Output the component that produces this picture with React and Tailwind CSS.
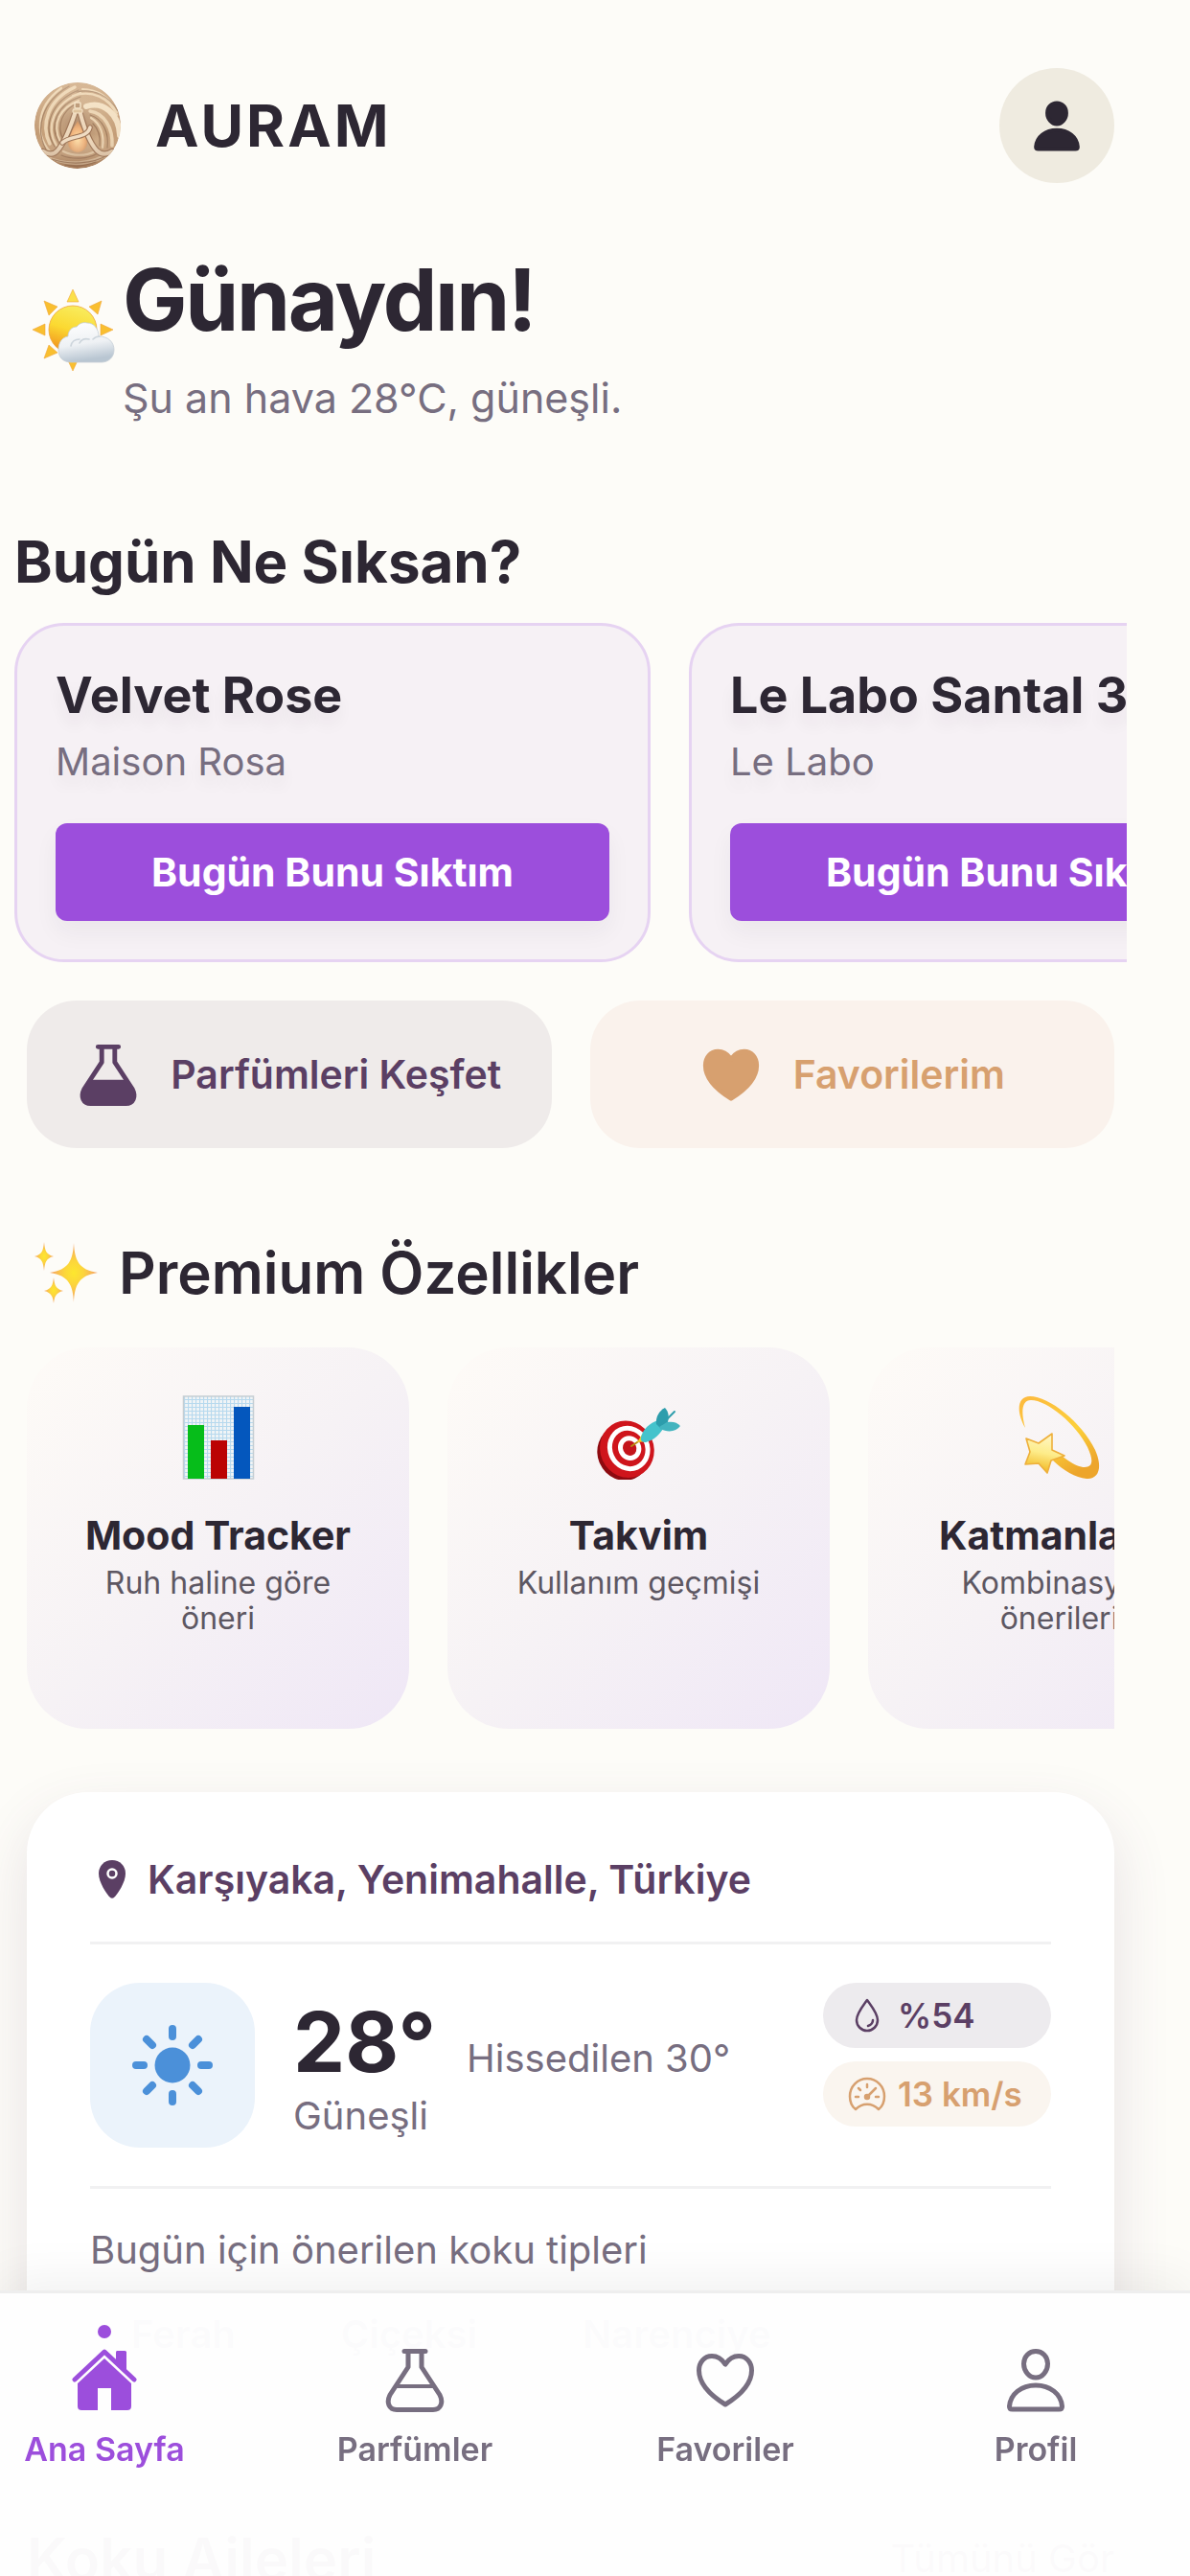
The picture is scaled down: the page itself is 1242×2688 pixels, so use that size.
import { useId } from "react";

/* -----------------------------
   Data
------------------------------*/
const suggestions = [
  { name: "Velvet Rose", brand: "Maison Rosa" },
  { name: "Le Labo Santal 33", brand: "Le Labo" },
];

const features = [
  { icon: ChartIcon, title: "Mood Tracker", text: "Ruh haline göre öneri" },
  { icon: TargetIcon, title: "Takvim", text: "Kullanım geçmişi" },
  { icon: DizzyIcon, title: "Katmanlama", text: "Kombinasyon önerileri" },
];

const scentTypes = ["Ferah", "Çiçeksi", "Narenciye"];

const tabs = [
  { label: "Ana Sayfa", icon: HomeIcon, active: true },
  { label: "Parfümler", icon: FlaskIcon },
  { label: "Favoriler", icon: HeartIcon },
  { label: "Profil", icon: PersonIcon },
];

/* -----------------------------
   Icons
------------------------------*/
function Logo() {
  const id = useId();
  return (
    <svg viewBox="0 0 106 106" className="size-[106px]" aria-hidden="true">
      <defs>
        <radialGradient id={`${id}-base`} cx="50%" cy="50%" r="50%">
          <stop offset="0" stopColor="#a98365" />
          <stop offset="0.55" stopColor="#c9a681" />
          <stop offset="1" stopColor="#c29a74" />
        </radialGradient>
        <linearGradient id={`${id}-shade`} x1="0" y1="0" x2="0" y2="1">
          <stop offset="0" stopColor="#fff0d8" stopOpacity="0.35" />
          <stop offset="0.6" stopColor="#fff0d8" stopOpacity="0" />
          <stop offset="1" stopColor="#7d5136" stopOpacity="0.5" />
        </linearGradient>
        <radialGradient id={`${id}-glow`} cx="50%" cy="60%" r="60%">
          <stop offset="0" stopColor="#ffe0a8" />
          <stop offset="0.6" stopColor="#f0b27a" />
          <stop offset="1" stopColor="#c98a58" />
        </radialGradient>
        <clipPath id={`${id}-clip`}>
          <circle cx="53" cy="53" r="45" />
        </clipPath>
      </defs>
      <g clipPath={`url(#${id}-clip)`} fill="none" strokeLinecap="round">
        <circle cx="53" cy="53" r="45" fill={`url(#${id}-base)`} />
        <g stroke="#ead2b0" strokeWidth="2.2">
          <path d="M28 84C8 66 8 34 36 14" />
          <path d="M24 72C14 52 22 26 50 13" strokeWidth="3.5" />
          <path d="M31 74C19 54 28 30 56 19" />
          <path d="M35 70C25 50 36 34 54 27" />
          <path d="M58 15c16 0 29 9 36 24" />
          <path d="M48 22c20-7 38 2 46 20" />
          <path d="M62 33c18-6 34 8 35 30" strokeWidth="6" stroke="#f2dfc2" />
          <path d="M66 38c15 2 24 18 23 36" strokeWidth="3.5" />
          <path d="M67 45c10 6 14 18 12 31" />
          <path d="M22 86c18 8 46 8 66-6" />
          <path d="M32 90c16 5 34 4 50-5" />
          <path d="M38 80c10 5 24 5 33 0" />
        </g>
        <g stroke="#8f6a4e" strokeWidth="1.2" opacity="0.75">
          <path d="M20 78C8 56 16 28 44 12" />
          <path d="M29 75C16 54 25 28 54 16" />
          <path d="M34 72C22 52 32 31 56 23" />
          <path d="M38 68C30 52 38 38 50 31" />
          <path d="M52 18c18-4 34 4 43 20" />
          <path d="M66 42c13 4 20 18 18 34" />
          <path d="M69 51c6 6 8 14 7 23" />
          <path d="M26 88c18 6 42 6 60-5" />
          <path d="M36 84c12 5 28 4 38-2" />
          <path d="M40 94c10 2 22 1 32-3" />
        </g>
        <path d="M53 48c4 8 10 14 10 23a10 10 0 0 1-20 0c0-9 6-15 10-23z" fill={`url(#${id}-glow)`} />
        <path d="M50 41C45 56 40 70 32 79c-4 5-10 4-15 1" stroke="#9a7153" strokeWidth="6.5" />
        <path d="M50 41C45 56 40 70 32 79c-4 5-10 4-15 1" stroke="#ecd6ba" strokeWidth="4" />
        <path d="M56 41c4 15 9 29 17 38 5 5 11 4 16 1" stroke="#9a7153" strokeWidth="6.5" />
        <path d="M56 41c4 15 9 29 17 38 5 5 11 4 16 1" stroke="#ecd6ba" strokeWidth="4" />
        <path d="M37 71c8-8 26-4 29-16" stroke="#9a7153" strokeWidth="5.5" />
        <path d="M37 71c8-8 26-4 29-16" stroke="#f0dcc2" strokeWidth="3.5" />
        <rect x="50" y="29" width="6" height="6" rx="1" fill="#b08a66" stroke="#f4e4c8" strokeWidth="1.4" />
        <rect x="48" y="36" width="10" height="4" rx="1" fill="#d9bb93" stroke="#f4e4c8" strokeWidth="1" />
        <circle cx="53" cy="53" r="45" fill={`url(#${id}-shade)`} />
      </g>
    </svg>
  );
}

function SunCloudIcon() {
  const id = useId();
  return (
    <svg viewBox="0 0 86 86" className="size-[86px]" aria-hidden="true">
      <defs>
        <linearGradient id={`${id}-sun`} x1="0.6" y1="0" x2="0.3" y2="1">
          <stop offset="0" stopColor="#f8ec5e" />
          <stop offset="0.5" stopColor="#fbd931" />
          <stop offset="1" stopColor="#f08c1c" />
        </linearGradient>
        <linearGradient id={`${id}-cloud`} x1="0" y1="0" x2="0.2" y2="1">
          <stop offset="0" stopColor="#ffffff" />
          <stop offset="0.6" stopColor="#eef1f4" />
          <stop offset="1" stopColor="#b9c6d2" />
        </linearGradient>
      </defs>
      <g fill="#f9bf30" stroke="#f0a63a" strokeWidth="0.6">
        <path d="M42 1l6 13H36z" fill="#fbe04b" />
        <path d="M72 13l-4 14-9-8z" />
        <path d="M12 13l14 6-9 9z" />
        <path d="M0 43l13-6v12z" />
        <path d="M84 43l-13-6v12z" />
        <path d="M12 73l5-14 9 8z" />
        <path d="M42 86l-6-13h12z" />
      </g>
      <circle cx="42" cy="43" r="25" fill={`url(#${id}-sun)`} stroke="#f0a63a" strokeWidth="0.8" />
      <path
        d="M40 77c-8 0-13-5-13-13 0-8 4-13 10-14 0-6 4-10 9-10 3-4 7-5 11-4 7 0 12 6 12 14 10 0 16 6 16 14 0 8-6 13-13 13z"
        fill={`url(#${id}-cloud)`}
        stroke="#c5ced6"
        strokeWidth="0.8"
      />
      <path d="M40 60c1-5 5-7 9-7m0 4c2-4 6-5 10-4m11-3c-3 0-5 1-7 3" fill="none" stroke="#cdd5dc" strokeWidth="1.6" strokeLinecap="round" />
    </svg>
  );
}

function SparklesIcon() {
  const id = useId();
  return (
    <svg viewBox="0 0 66 66" className="size-[66px]" aria-hidden="true">
      <defs>
        <radialGradient id={id}>
          <stop offset="0" stopColor="#fde72e" />
          <stop offset="0.4" stopColor="#fcd53c" />
          <stop offset="1" stopColor="#f5a06a" />
        </radialGradient>
      </defs>
      <g fill={`url(#${id})`}>
        <path d="M41 2c1 18 5 28 25 31-20 3-24 13-25 31-1-18-5-28-25-31 20-3 24-13 25-31z" />
        <path d="M10 1c1 9 2 13 10 15-8 2-9 6-10 15-1-9-2-13-10-15 8-2 9-6 10-15z" />
        <path d="M20 38c1 8 2 12 10 14-8 2-9 6-10 13-1-7-2-11-10-13 8-2 9-6 10-14z" />
      </g>
    </svg>
  );
}

function ChartIcon() {
  const id = useId();
  return (
    <svg viewBox="0 0 88 88" className="size-[88px]" aria-hidden="true">
      <defs>
        <pattern id={id} width="4" height="4" patternUnits="userSpaceOnUse">
          <rect width="4" height="4" fill="#f0f4f6" />
          <path d="M0 0.5h4M0.5 0v4" stroke="#b7d9ee" strokeWidth="1.2" />
        </pattern>
      </defs>
      <rect x="7.5" y="1" width="73" height="86" fill={`url(#${id})`} stroke="#c5ced3" strokeWidth="1.5" />
      <rect x="12" y="31" width="17" height="56" fill="#06bd1a" />
      <rect x="36" y="47" width="17" height="40" fill="#bb0303" />
      <rect x="60" y="12" width="17" height="75" fill="#0457bd" />
    </svg>
  );
}

function TargetIcon() {
  return (
    <svg viewBox="0 0 88 88" className="size-[88px]" aria-hidden="true">
      <g transform="rotate(-24 30 58)">
        <ellipse cx="27" cy="59" rx="27" ry="29" fill="#8d0a10" />
        <ellipse cx="32" cy="57" rx="28" ry="30" fill="#cf151c" />
        <ellipse cx="34" cy="57" rx="22" ry="24" fill="#fff" />
        <ellipse cx="34" cy="57" rx="17" ry="19" fill="#cf151c" />
        <ellipse cx="35" cy="57" rx="12" ry="13" fill="#fff" />
        <ellipse cx="35" cy="57" rx="7" ry="8" fill="#c4141b" />
      </g>
      <path d="M36 53l12-8" stroke="#b98e12" strokeWidth="2" strokeLinecap="round" />
      <path d="M42 49l5-8 6 7z" fill="#f3cf2b" />
      <path d="M46 44c2-9 9-15 18-18l6 7c-4 8-11 14-19 16-3 0-6-1-5-5z" fill="#45c3cc" />
      <path d="M62 30c-1-7 3-14 9-17 4 4 5 11 2 17l-6 5z" fill="#2d9dac" />
      <path d="M65 33l8-5c6-1 11 0 14 4-4 6-13 7-21 3z" fill="#43b4bf" />
      <path d="M68 30L81 17" stroke="#2d9dac" strokeWidth="2" strokeLinecap="round" />
    </svg>
  );
}

function DizzyIcon() {
  const id = useId();
  return (
    <svg viewBox="0 0 88 88" className="size-[88px]" aria-hidden="true">
      <defs>
        <linearGradient id={`${id}-trail`} x1="0" y1="0" x2="0.6" y2="1">
          <stop offset="0" stopColor="#fdb93e" />
          <stop offset="0.6" stopColor="#fcd03a" />
          <stop offset="1" stopColor="#eda52b" />
        </linearGradient>
        <linearGradient id={`${id}-star`} x1="0.6" y1="0" x2="0.4" y2="1">
          <stop offset="0" stopColor="#fff7c9" />
          <stop offset="0.5" stopColor="#fdec8a" />
          <stop offset="1" stopColor="#f1b51b" />
        </linearGradient>
      </defs>
      <path
        d="M8 34C-2 16 0 1 13 1c20 0 54 27 68 56 8 18 4 31-9 30-12-1-25-9-36-20l6-8c10 10 21 16 28 16 8 0 10-6 3-21C61 30 31 5 14 5 5 5 3 16 8 34z"
        fill={`url(#${id}-trail)`}
      />
      <path
        d="M36 40l0 17 13 6-14 5-4 13-9-10-14 1 5-13-4-14 13 5z"
        fill={`url(#${id}-star)`}
        stroke="#eeb03c"
        strokeWidth="1.6"
        strokeLinejoin="round"
      />
    </svg>
  );
}

function FlaskIcon({ filled }) {
  return (
    <svg viewBox="0 0 68 68" className="size-full" fill="none" stroke="currentColor" strokeWidth="5" strokeLinejoin="round" strokeLinecap="round" aria-hidden="true">
      <path d="M23 4.500h22M27 5v16L8 50c-4 8-1 15.500 7 15.500h38c8 0 11-7.500 7-15.500L41 21V5" />
      {filled ? (
        <path d="M14 40h40l6 10c4 8 1 15-7 15H15c-8 0-11-7-7-15z" fill="currentColor" stroke="none" />
      ) : (
        <path d="M15 41h38" strokeWidth="4" />
      )}
    </svg>
  );
}

function HeartIcon({ filled }) {
  return (
    <svg viewBox="0 0 68 68" className="size-full" fill={filled ? "currentColor" : "none"} stroke="currentColor" strokeWidth="5" strokeLinejoin="round" aria-hidden="true">
      <path d="M34 18C30 12 25.500 9.500 20 9.500 12 9.500 6.500 16 6.500 24.500 6.500 38 17 49.500 34 60c17-10.500 27.500-22 27.500-35.500C61.500 16 56 9.500 48 9.500 42.500 9.500 38 12 34 18z" />
    </svg>
  );
}

function PersonIcon({ filled }) {
  return (
    <svg viewBox="0 0 68 68" className="size-full" fill={filled ? "currentColor" : "none"} stroke="currentColor" strokeWidth="5" strokeLinejoin="round" aria-hidden="true">
      <path d="M34 4.500c7 0 12.500 5.500 12.500 13S41 32 34 32s-12.500-7-12.500-14.500S27 4.500 34 4.500z" />
      <path d="M6.500 62C7.500 49 19 40 34 40s26.500 9 27.500 22c0 2-1 3-3 3h-49c-2 0-3-1-3-3z" />
    </svg>
  );
}

function HomeIcon() {
  return (
    <svg viewBox="0 0 68 68" className="size-full" fill="currentColor" aria-hidden="true">
      <path d="M3 34L34 5l31 29" fill="none" stroke="currentColor" strokeWidth="5" strokeLinecap="round" strokeLinejoin="round" />
      <path d="M46 6c0-2 1-2 2-2h7c2 0 2 1 2 2v20L46 15z" />
      <path d="M34 12l28 26v24c0 3-2 4-4 4H41V43H27v23H10c-2 0-4-1-4-4V38z" />
    </svg>
  );
}

function PinIcon() {
  return (
    <svg viewBox="0 0 30 42" className="h-[42px] w-[30px]" aria-hidden="true">
      <path d="M15 1c8 0 14 6 14 14 0 9-8 21-12 25-1 1-3 1-4 0C9 36 1 24 1 15 1 7 7 1 15 1z" fill="currentColor" />
      <circle cx="15" cy="15" r="4.500" fill="none" stroke="#fff" strokeWidth="2.500" />
    </svg>
  );
}

function SunIcon() {
  return (
    <svg viewBox="0 0 84 84" className="size-[84px]" stroke="currentColor" strokeWidth="8" strokeLinecap="round" aria-hidden="true">
      <circle cx="42" cy="42" r="18.500" fill="currentColor" stroke="none" />
      <path d="M42 4v8M42 72v8M4 42h8M72 42h8M15 15l6 6M63 63l6 6M15 69l6-6M63 21l6-6" />
    </svg>
  );
}

function DropIcon() {
  return (
    <svg viewBox="0 0 40 36" className="h-9 w-10" fill="none" stroke="currentColor" strokeWidth="2.500" strokeLinecap="round" strokeLinejoin="round" aria-hidden="true">
      <path d="M20 2c5 7 11 14 11 21 0 6-5 11-11 11S9 29 9 23C9 16 15 9 20 2z" />
      <path d="M26 23c0 3-2 5-5 6" />
    </svg>
  );
}

function GaugeIcon() {
  return (
    <svg viewBox="0 0 40 36" className="h-9 w-10" fill="none" stroke="currentColor" strokeWidth="2.500" strokeLinecap="round" strokeLinejoin="round" aria-hidden="true">
      <path d="M8 34C4 31 2 26 2 20.500 2 10 10 2 20 2s18 8 18 18.500c0 5.500-2 10.500-6 13.500-7-7-17-7-24 0z" />
      <path d="M20 8v3M11 12l2 2M8 21h3M29 21h3M29 12l-8 8" />
      <circle cx="20" cy="21" r="2" fill="currentColor" />
    </svg>
  );
}

/* -----------------------------
   Screen
------------------------------*/
export default function App() {
  return (
    <div className="h-screen overflow-hidden bg-[#fdfcf8] font-['Inter',sans-serif] text-[#2d2733]">
      <main className="h-full overflow-x-hidden overflow-y-auto pt-[71px] pr-[79px] pb-[298px] pl-7 [scrollbar-width:none]">
        {/* Header */}
        <header className="flex items-center justify-between">
          <div className="flex items-center gap-7">
            <Logo />
            <span className="text-[61px] leading-[76px] font-bold tracking-wider">AURAM</span>
          </div>
          <button
            type="button"
            aria-label="Profil"
            className="flex size-[120px] items-center justify-center rounded-full bg-[#efebe0]"
          >
            <span className="size-[54px]">
              <PersonIcon filled />
            </span>
          </button>
        </header>

        {/* Greeting */}
        <section className="mt-[68px] flex items-center">
          <div className="w-[100px] pb-4 pl-[6px]">
            <SunCloudIcon />
          </div>
          <div>
            <h1 className="text-[90px] leading-[108px] font-bold tracking-tight">Günaydın!</h1>
            <p className="mt-[18px] text-[43px] leading-[60px] text-[#776e80]">Şu an hava 28°C, güneşli.</p>
          </div>
        </section>

        {/* Today's picks */}
        <section className="-mx-[13px] mt-[105px]">
          <h2 className="text-[60px] leading-[72px] font-bold">Bugün Ne Sıksan?</h2>
          <div className="mt-7 flex gap-10 overflow-x-auto [scrollbar-width:none]">
            {suggestions.map(s => (
              <article
                key={s.name}
                className="w-[664px] shrink-0 rounded-[52px] border-3 border-[#e6d3f2] bg-[#f6f1f5] p-10"
              >
                <h3 className="text-[52px] leading-[66px] font-bold [text-shadow:0_12px_16px_rgba(45,39,51,0.06)]">
                  {s.name}
                </h3>
                <p className="mt-[10px] text-[40px] leading-[52px] text-[#776e80] [text-shadow:0_12px_16px_rgba(45,39,51,0.06)]">
                  {s.brand}
                </p>
                <button
                  type="button"
                  className="mt-[38px] h-[102px] w-full rounded-xl bg-[#9c4edc] text-[41px] leading-[52px] font-bold text-white shadow-[0_12px_24px_rgba(45,39,51,0.05)]"
                >
                  Bugün Bunu Sıktım
                </button>
              </article>
            ))}
          </div>
        </section>

        {/* Shortcuts */}
        <div className="mt-10 grid grid-cols-2 gap-10 text-[41px] leading-[52px] font-semibold">
          <button
            type="button"
            className="flex h-[154px] items-center justify-center gap-8 rounded-[52px] bg-[#efebea] text-[#5b3f64]"
          >
            <span className="size-[66px]">
              <FlaskIcon filled />
            </span>
            Parfümleri Keşfet
          </button>
          <button
            type="button"
            className="flex h-[154px] items-center justify-center gap-8 rounded-[52px] bg-[#faf2ec] text-[#d7a06f]"
          >
            <span className="size-[66px]">
              <HeartIcon filled />
            </span>
            Favorilerim
          </button>
        </div>

        {/* Premium features */}
        <section className="mt-[94px]">
          <h2 className="flex items-center gap-[22px] pl-2 text-[60px] leading-[72px] font-semibold">
            <SparklesIcon />
            Premium Özellikler
          </h2>
          <div className="mt-[42px] flex gap-10 overflow-x-auto [scrollbar-width:none]">
            {features.map(({ icon: Icon, title, text }) => (
              <article
                key={title}
                className="flex h-[398px] w-[399px] shrink-0 flex-col items-center rounded-[64px] bg-linear-to-br from-[#fefbf7] via-[#f6f2f5] to-[#efe7f6] px-12 pt-[50px] text-center"
              >
                <Icon />
                <h3 className="mt-8 text-[41px] leading-[52px] font-bold">{title}</h3>
                <p className="mt-[5px] text-[32px] leading-[37px] text-[#5d5762]">{text}</p>
              </article>
            ))}
          </div>
        </section>

        {/* Weather */}
        <section className="mt-[66px] rounded-[64px] bg-white px-[66px] pt-[65px] pb-[66px] shadow-[0_24px_60px_rgba(91,63,100,0.14)]">
          <div className="flex items-center gap-[22px] border-b-3 border-[#f1f1f2] pb-[39px] pl-2 text-[#5b3f64]">
            <PinIcon />
            <span className="text-[41px] leading-[52px] font-semibold">Karşıyaka, Yenimahalle, Türkiye</span>
          </div>

          <div className="flex items-center border-b-3 border-[#f1f1f2] py-10">
            <div className="flex size-[172px] items-center justify-center rounded-[52px] bg-[#ebf3fb] text-[#4b90d9]">
              <SunIcon />
            </div>
            <div className="ml-10 pt-1">
              <div className="flex items-baseline gap-8">
                <span className="text-[86px] leading-[102px] font-bold">28°</span>
                <span className="text-[40px] leading-[52px] text-[#776e80]">Hissedilen 30°</span>
              </div>
              <p className="text-[40px] leading-[52px] text-[#776e80]">Güneşli</p>
            </div>
            <div className="ml-auto flex w-[238px] flex-col gap-[14px] self-start text-[35px] leading-[44px] font-semibold">
              <div className="flex items-center gap-3 rounded-full bg-[#edebee] py-3 pl-[26px] text-[#5b3f64]">
                <DropIcon />
                %54
              </div>
              <div className="flex items-center gap-3 rounded-full bg-[#faf5ef] py-3 pl-[26px] whitespace-nowrap text-[#d7a06f]">
                <GaugeIcon />
                13 km/s
              </div>
            </div>
          </div>

          <p className="pt-[38px] text-[40px] leading-[52px] text-[#776e80]">Bugün için önerilen koku tipleri</p>
          <div className="mt-6 flex gap-6">
            {scentTypes.map(type => (
              <span
                key={type}
                className="rounded-full bg-[#faf8fa] px-[43px] py-3 text-[40px] leading-[52px] font-semibold text-[#776e80]"
              >
                {type}
              </span>
            ))}
          </div>
        </section>

        {/* Scent families */}
        <section className="mt-[94px] flex items-center justify-between">
          <h2 className="text-[60px] leading-[72px] font-semibold">Koku Aileleri</h2>
          <a href="#aileler" className="text-[40px] leading-[52px] text-[#5b3f64]">
            Tümünü Gör
          </a>
        </section>
      </main>

      {/* Tab bar */}
      <nav className="fixed inset-x-0 bottom-0 flex justify-between border-t-3 border-[#eeeeee] bg-[#fefefe]/98 pt-[33px] pr-[52px] pb-28 shadow-[0_-12px_48px_rgba(0,0,0,0.06)]">
        {tabs.map(({ label, icon: Icon, active }) => (
          <a
            key={label}
            href="#"
            className={`flex w-[218px] flex-col items-center ${active ? "text-[#9c4edc]" : "text-[#776e80]"}`}
          >
            <span className={`size-[14px] rounded-full ${active ? "bg-[#9c4edc]" : "bg-transparent"}`} />
            <span className="mt-[9px] size-[68px]">
              <Icon />
            </span>
            <span className="mt-[19px] text-[34px] leading-[40px] font-semibold whitespace-nowrap">{label}</span>
          </a>
        ))}
      </nav>
    </div>
  );
}
